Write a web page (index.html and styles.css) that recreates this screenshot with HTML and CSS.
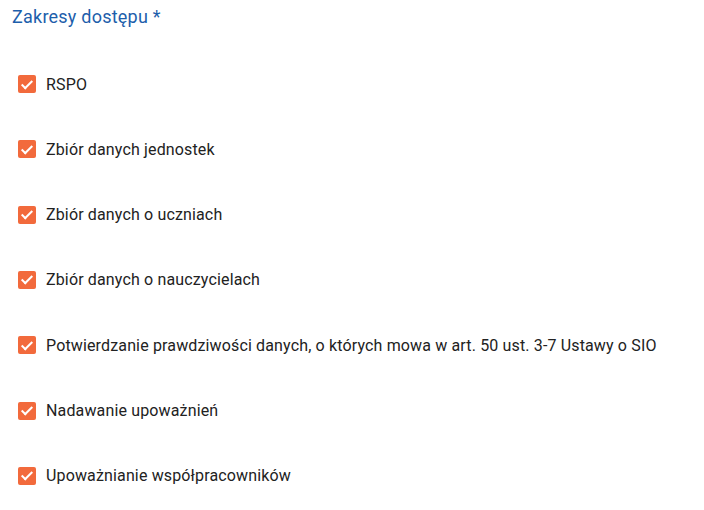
FILE: index.html
```html
<!doctype html>
<html lang="pl">

<head>
  <title>Zakresy dostępu</title>
  <meta charset="utf-8" />
  <link rel="stylesheet" href="styles.css">
</head>

<body>
  <fieldset class="scopes">
    <legend class="scopes-title">Zakresy dostępu *</legend>
    <ul class="scope-list">
      <li class="scope"><span class="check"></span>RSPO</li>
      <li class="scope"><span class="check"></span>Zbiór danych jednostek</li>
      <li class="scope"><span class="check"></span>Zbiór danych o uczniach</li>
      <li class="scope"><span class="check"></span>Zbiór danych o nauczycielach</li>
      <li class="scope"><span class="check"></span>Potwierdzanie prawdziwości danych, o których mowa w art. 50 ust. 3-7 Ustawy o SIO</li>
      <li class="scope"><span class="check"></span>Nadawanie upoważnień</li>
      <li class="scope"><span class="check"></span>Upoważnianie współpracowników</li>
    </ul>
  </fieldset>
</body>

</html>
```

FILE: styles.css
```css
html {
  font-family: Roboto, "Liberation Sans", sans-serif;
  color: #222;
  background: #fff;
}

body {
  margin: 0;
}

.scopes {
  margin: 0;
  padding: 6px 0 0 12px;
  border: none;
}

.scopes-title {
  float: left;
  width: 100%;
  padding: 0;
  font-size: 18px;
  line-height: 22px;
  letter-spacing: 0.23px;
  color: #1d5eab;
}

.scope-list {
  clear: both;
  list-style: none;
  margin: 0;
  padding: 44px 0 0 6px;
  display: flex;
  flex-direction: column;
  gap: 41.33px;
}

.scope {
  display: flex;
  align-items: center;
  gap: 10px;
  height: 24px;
  font-size: 16px;
  letter-spacing: 0.145px;
}

/* checked box with a white tick */
.check {
  position: relative;
  width: 18px;
  height: 18px;
  border-radius: 2px;
  background: #f26a3c;
  flex: none;
}

.check::after {
  content: "";
  position: absolute;
  left: 6px;
  top: 2.5px;
  width: 4px;
  height: 9px;
  border: solid #fff;
  border-width: 0 2px 2px 0;
  transform: rotate(45deg);
}
```
